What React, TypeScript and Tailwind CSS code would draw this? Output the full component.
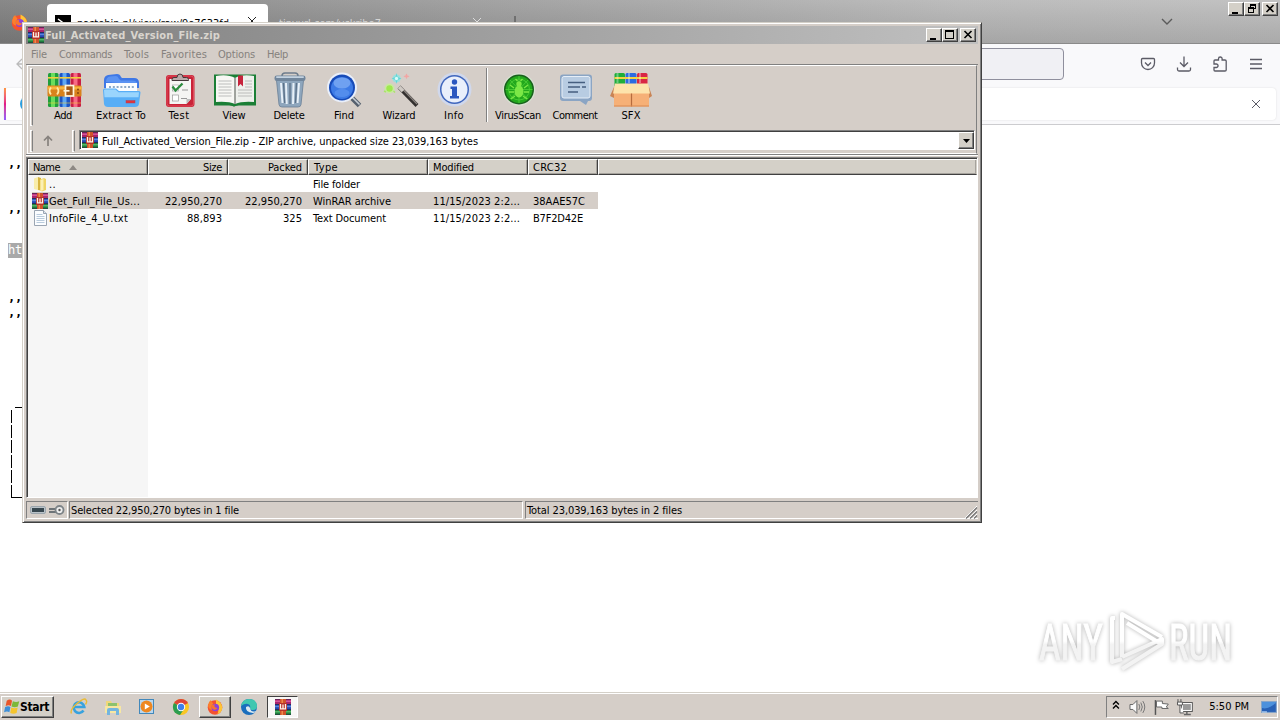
import { useLayoutEffect, useRef } from "react";
import type { ReactNode } from "react";

/* Text run whose letter spacing is computed so it fills exactly `w` pixels. */
function T({ w, children, className = "" }: { w: number; children: string; className?: string }) {
  const ref = useRef<HTMLSpanElement>(null);
  useLayoutEffect(() => {
    const el = ref.current;
    if (!el) return;
    el.style.letterSpacing = "0px";
    el.style.width = "auto";
    const natural = el.getBoundingClientRect().width;
    el.style.letterSpacing = (w - natural) / children.length + "px";
    el.style.width = w + "px";
  }, [w, children]);
  return (
    <span ref={ref} className={"inline-block shrink-0 whitespace-pre " + className}>
      {children}
    </span>
  );
}

function RarIcon({ className = "size-4" }: { className?: string }) {
  return (
    <svg viewBox="0 0 16 16" className={"shrink-0 " + className}>
      <rect width="16" height="16" fill="#2a2140" />
      <rect y="0.500" width="16" height="4.500" fill="#a8246c" />
      <rect y="1.500" width="16" height="1.500" fill="#d65597" />
      <rect y="5.700" width="16" height="4.600" fill="#2448b0" />
      <rect y="6.700" width="16" height="1.500" fill="#5a86dd" />
      <rect y="11" width="16" height="4.500" fill="#1f7d3d" />
      <rect y="12" width="16" height="1.500" fill="#55b568" />
      <rect x="5" y="0" width="6" height="16" fill="#d0532a" />
      <rect x="6.500" y="0" width="1.500" height="16" fill="#ef8a4a" />
      <rect x="4" y="4" width="8" height="8" fill="#b8322a" />
      <path d="M5.500 5v4.800h5V5M8 5.500v4" fill="none" stroke="#fdf4ea" strokeWidth="1.300" />
    </svg>
  );
}

function AddIcon() {
  const books = [
    ["#1f9e3c", "#69dd5c", 9],
    ["#1d55c4", "#5ea8f4", 20.5],
    ["#c81f45", "#f76a86", 31.5],
  ] as const;
  return (
    <g>
      {books.map(([dark, light, x]) => (
        <g key={x}>
          <rect x={x} y="1" width="10.5" height="34" rx="1.5" fill={dark} />
          <rect x={x + 3} y="1" width="4" height="34" fill={light} />
          <rect x={x} y="5" width="10.5" height="1.6" fill="#f2cf3c" />
          <rect x={x} y="30.5" width="10.5" height="1" fill="#f2cf3c" opacity="0.6" />
        </g>
      ))}
      <rect x="8.5" y="13.5" width="34" height="11" rx="1" fill="#d9821c" />
      <rect x="8.5" y="14.5" width="34" height="3" fill="#f9b43e" />
      <path d="M12 15.5q-3 3.500 0 7M18 15.500q3 3.500 0 7" fill="none" stroke="#ffe9a6" strokeWidth="1.8" />
      <rect x="26.500" y="13.500" width="8" height="10.500" fill="#a95b16" stroke="#fff6dd" strokeWidth="1.7" />
      <path d="M24.500 18.800h6" stroke="#fff6dd" strokeWidth="1.700" />
      <circle cx="39" cy="17.500" r="0.900" fill="#7e3e0c" />
      <circle cx="39" cy="21" r="0.900" fill="#7e3e0c" />
    </g>
  );
}

function ExtractIcon() {
  return (
    <g>
      <path d="M7 8q0-4 4-5l9-1q3 0 4 3l1 1h12q5 0 5 5v5H7z" fill="#3f78e6" />
      <path d="M9 10q0-5 4-5.500l6-.500q2 0 3 3l2 1.500H35q5 0 6 4z" fill="#5b93f2" />
      <rect x="9" y="11" width="31" height="13" fill="#fbfdff" />
      <path d="M12 15h26" stroke="#8eaac8" strokeWidth="2" strokeDasharray="2 1.800" />
      <path d="M6 18q0-1.500 1.500-1.500H19l3 2.500h20q1.500 0 1.500 1.500L42 32q-.4 3-4 3H11q-3.500 0-4-3z" fill="#58aef6" />
      <path d="M7 18.500q0-1 1-1h10.500l3 2.700H42l-.5 5H7.500z" fill="#9ad5fd" />
      <rect x="29" y="28.500" width="9" height="2.500" fill="#e2353b" stroke="#a9435f" strokeWidth="0.500" />
    </g>
  );
}

function TestIcon() {
  return (
    <g>
      <rect x="11" y="3" width="28.500" height="32" rx="3" fill="#c92338" />
      <rect x="12" y="4" width="26.500" height="30" rx="2.500" fill="none" stroke="#e8606c" strokeWidth="0.700" />
      <path d="M14.500 7h21.500v20l-4.500 5H14.500z" fill="#f5f5f3" />
      <path d="M36 27h-4.500v5z" fill="#bbb" />
      <path d="M17 7.500q0-2 2-2h3q0-3.500 3-3.500t3 3.500h3.500q2 0 2 2v1H17z" fill="#b9a9a9" stroke="#46393b" />
      <rect x="17.500" y="13" width="6" height="6" fill="#fff" stroke="#999" strokeWidth="0.600" />
      <path d="M17.500 14.500l3 4 7-7" fill="none" stroke="#2b8c3e" strokeWidth="2.300" />
      <rect x="17.500" y="23" width="6" height="6" fill="#fff" stroke="#999" strokeWidth="0.700" />
      <path d="M27 18h6M26 26.500h6" stroke="#999" />
    </g>
  );
}

function ViewIcon() {
  return (
    <g>
      <path d="M4 2.500h42v31H29q-4 0-5 1.500-1-1.500-5-1.500H4z" fill="#1b7f36" />
      <path d="M6 4q12-2 19 2v26q-7-3-19-2z" fill="#f7f7f4" />
      <path d="M25 6q7-4 19-2v26q-12-1-19 2z" fill="#eef0ec" />
      <path d="M25 6v26" stroke="#8b8f8a" strokeWidth="1.600" />
      <path d="M8.500 9h13M8.500 12h13M8.500 15h13M8.500 18h13M8.500 21h13M8.500 24h13M28 18h14M28 21h14M28 24h14M35 9h7M35 12h7M35 15h7" stroke="#b4b6b6" strokeWidth="0.900" />
      <path d="M28 3.500h5v11l-2.500-2.500-2.500 2.500z" fill="#c6243c" />
    </g>
  );
}

function DeleteIcon() {
  return (
    <g>
      <path d="M11.500 8.500h27l-2.500 24q-.3 2.500-3 2.500H17q-2.700 0-3-2.500z" fill="#8ea6bd" stroke="#6a7f96" strokeWidth="0.800" />
      <path d="M16 11l1.500 20M21 11l.7 21M28.500 11l-.5 21M34 11l-1.500 20" stroke="#e7f0f8" strokeWidth="2" />
      <path d="M18.500 11l1.200 20M25 11v21M31.500 11l-1 20" stroke="#5c7188" strokeWidth="1.300" />
      <path d="M17 4q0-3 3-3h10q3 0 3 3" fill="none" stroke="#6d7c8c" strokeWidth="1.500" />
      <rect x="9.500" y="3.500" width="31" height="5.500" rx="2.300" fill="#71869c" />
      <rect x="11" y="4.200" width="28" height="1.800" rx="0.900" fill="#c3d2e0" />
    </g>
  );
}

function FindIcon() {
  return (
    <g>
      <path d="M31 25l8.500 8.500" stroke="#55606e" strokeWidth="5" />
      <path d="M31.500 24.500l8 8" stroke="#c6cdd5" strokeWidth="1.600" />
      <circle cx="22" cy="15.500" r="15" fill="#e9effa" />
      <circle cx="22" cy="15.500" r="13" fill="#174bb8" />
      <circle cx="22" cy="16" r="11" fill="#3d7be6" />
      <ellipse cx="22" cy="11" rx="8.500" ry="5.500" fill="#8ab5f8" opacity="0.650" />
      <ellipse cx="22" cy="21" rx="7.500" ry="4" fill="#6fa4f6" opacity="0.450" />
    </g>
  );
}

function WizardIcon() {
  return (
    <g>
      <path d="M24 15l18 18.500" stroke="#33302f" strokeWidth="4" />
      <path d="M25 14.500l17 17.500" stroke="#8b8580" strokeWidth="1.200" />
      <path d="M24 15l4 4" stroke="#cfcac4" strokeWidth="3.600" />
      <circle cx="14.500" cy="16.500" r="5" fill="#c3f58e" opacity="0.700" />
      <circle cx="14.500" cy="16.500" r="3.200" fill="#9fe94f" />
      <path d="M9 19l2 1M18.500 19l1.500 1.500" stroke="#a9e66a" strokeWidth="1.500" />
      <circle cx="21.500" cy="6.500" r="4" fill="#8de6e4" opacity="0.800" />
      <path d="M21.500 1l1 4 4 1.500-4 1.500-1 4-1-4-4-1.500 4-1.500z" fill="#5fd6d8" />
      <circle cx="21.500" cy="6.500" r="1.700" fill="#d8fbf8" />
      <path d="M31.500 1.500l.7 2 2.300.800-2.300.800-.7 2-.7-2-2.300-.800 2.300-.800z" fill="#f0918f" />
      <circle cx="31.500" cy="4.300" r="2" fill="#f4b3b0" opacity="0.600" />
    </g>
  );
}

function InfoIcon() {
  return (
    <g>
      <circle cx="24.500" cy="17.500" r="17" fill="#d0d8ec" />
      <circle cx="24.500" cy="17.500" r="14.500" fill="#3f66bd" />
      <circle cx="24.500" cy="17.500" r="13" fill="#e9effb" />
      <path d="M20.500 14.500h6.500V24h2v2.500h-9V24h2v-7h-1.500z" fill="#2a56bf" />
      <circle cx="24.500" cy="10" r="2.700" fill="#2a56bf" />
    </g>
  );
}

function VirusIcon() {
  return (
    <g>
      <circle cx="25" cy="17.500" r="16.200" fill="#d8e2d2" />
      <circle cx="25" cy="17.500" r="15" fill="#19611d" />
      <circle cx="25" cy="17.500" r="13.400" fill="#22a81c" />
      <path d="M25 4v27M11.500 17.500h27M16 8l18 19M34 8L16 27" stroke="#4fd03a" strokeWidth="0.800" />
      <circle cx="25" cy="17.500" r="10.500" fill="none" stroke="#4fd03a" strokeWidth="0.800" />
      <ellipse cx="25" cy="19.500" rx="4.500" ry="6" fill="#7be846" />
      <circle cx="25" cy="12" r="2.700" fill="#7be846" />
      <path d="M20 16l-4-3M20 20h-5M21 24l-4 3M30 16l4-3M30 20h5M29 24l4 3M23.500 9l-2-2M26.500 9l2-2" stroke="#7be846" strokeWidth="1.300" />
    </g>
  );
}

function CommentIcon() {
  return (
    <g>
      <path d="M12 2.500h26q3 0 3 3V26q0 3-3 3h-1l-2 4-6-4H12q-3 0-3-3V5.500q0-3 3-3z" fill="#8ba5c4" />
      <path d="M13 4.500h24q2 0 2 2V24q0 2-2 2H13q-2 0-2-2V6.500q0-2 2-2z" fill="#b8cce2" stroke="#e6eef7" />
      <path d="M17 10.500h17M17 15h12M31 15h4M17 20h10" stroke="#455e7f" strokeWidth="1.700" />
    </g>
  );
}

function SfxIcon() {
  return (
    <g>
      <rect x="7.500" y="1" width="10.500" height="14" rx="1.500" fill="#1fae3a" />
      <rect x="18.500" y="1" width="11" height="14" rx="1.500" fill="#2c6be0" />
      <rect x="30" y="1" width="10.500" height="14" rx="1.500" fill="#d92644" />
      <path d="M7.500 6h33" stroke="#f4d244" strokeWidth="1.800" />
      <path d="M10.500 1v10M22 1v10M33 1v10" stroke="#fff" strokeWidth="2" opacity="0.350" />
      <path d="M7 15h35v19.500H7z" fill="#f6b077" />
      <path d="M7 15l-4 9 4 2zM42 15l3 9-3 2z" fill="#c98455" />
      <path d="M8 11.500h33l2 10H6z" fill="#fde3ac" />
      <path d="M24.500 21.500v13" stroke="#b66c3e" strokeWidth="1.200" />
      <path d="M7 34h35" stroke="#d98a55" />
    </g>
  );
}

function Tool({ icon, label, w, className }: { icon: ReactNode; label: string; w: number; className: string }) {
  return (
    <div className={"flex shrink-0 flex-col items-center " + className}>
      <svg viewBox="0 0 48 36" className="h-9 w-12">{icon}</svg>
      <T w={w} className="mt-px leading-[14px]">{label}</T>
    </div>
  );
}

const raised = "border border-t-white border-l-white border-r-[#404040] border-b-[#404040] bg-[#d4d0c8] shadow-[inset_-1px_-1px_0_#808080]";

function CaptionButtons({ restore = false }: { restore?: boolean }) {
  return (
    <div className="flex">
      <div className={"h-[14px] w-4 " + raised}>
        <svg viewBox="0 0 14 12" className="h-3 w-[14px]"><path d="M3 9h6v2H3z" /></svg>
      </div>
      <div className={"mr-0.5 h-[14px] w-4 " + raised}>
        <svg viewBox="0 0 14 12" className="h-3 w-[14px]" shapeRendering="crispEdges">
          {restore ? (
            <path d="M5 1h6v5H9v4H3V4h2zm1 2v1h3v1h1V3zM4 6v3h4V6z" fillRule="evenodd" />
          ) : (
            <path d="M2 1h9v9H2zm1 2v6h7V3z" fillRule="evenodd" />
          )}
        </svg>
      </div>
      <div className={"h-[14px] w-4 " + raised}>
        <svg viewBox="0 0 14 12" className="h-3 w-[14px]"><path d="M3.500 2l7 7M10.500 2l-7 7" stroke="#000" strokeWidth="1.600" /></svg>
      </div>
    </div>
  );
}

function Gripper({ className }: { className: string }) {
  return <div className={"w-[3px] shrink-0 border-y border-l border-r border-y-white border-l-white border-r-[#808080] " + className} />;
}

function FirefoxIcon({ className }: { className: string }) {
  return (
    <svg viewBox="0 0 16 16" className={className}>
      <circle cx="8" cy="8.500" r="7.300" fill="#f5522f" />
      <path d="M9 .500q6 3 6.300 8-.3 5-5 6.800Q13 10 9 5z" fill="#fdc536" />
      <path d="M1 6q1-4 3-5 0 2 2 3l-1 7q-4-1-4-5z" fill="#fb7f2c" />
      <circle cx="8.300" cy="8.500" r="3.800" fill="#8a42dc" />
      <path d="M4 7q1.500-2 4-1.500-1 1-.5 2t3 1.500q-1.500 2.500-4 1.500T4 7z" fill="#f9742f" />
    </svg>
  );
}

function Browser() {
  return (
    <div className="flex h-[692px] flex-col bg-white">
      <div className="flex h-11 shrink-0 border-b border-[#8a8a8a] bg-[linear-gradient(to_bottom,rgba(255,255,255,0.07),rgba(0,0,0,0.1)),linear-gradient(to_right,#808080,#b8b8b8_75%,#bdbdbd)]">
        <FirefoxIcon className="mt-3.5 ml-[11px] size-[17px]" />
        <div className="mt-1 ml-[19px] flex h-10 w-[221px] rounded-t bg-white">
          <svg viewBox="0 0 16 16" className="mt-[11px] ml-2 size-4"><rect width="16" height="16" /><path d="M3 4l4 3-4 3M8 11h4" stroke="#fff" fill="none" strokeWidth="1.500" /></svg>
          <T w={152} className="mt-3 ml-1.5 text-[11px] leading-4">pastebin.pl/view/raw/9e7633fd</T>
          <svg viewBox="0 0 10 10" className="mt-3 ml-[18px] size-[10px]"><path d="M1 1l8 8M9 1L1 9" stroke="#222" /></svg>
        </div>
        <T w={102} className="mt-4 ml-[11px] text-[11px] leading-4 text-[#d5d5d5]">tinyurl.com/yckrjbe7</T>
        <svg viewBox="0 0 10 10" className="mt-[17px] ml-[91px] size-[10px]"><path d="M1 1l8 8M9 1L1 9" stroke="#ddd" /></svg>
        <svg viewBox="0 0 12 12" className="mt-4 ml-[27px] size-3"><path d="M6 0v12M0 6.500h12" stroke="#444" /></svg>
        <svg viewBox="0 0 12 8" className="mt-[18px] mr-[55px] ml-auto h-2 w-3"><path d="M1 1l5 5 5-5" stroke="#5b5b5b" strokeWidth="1.400" fill="none" /></svg>
        <div className="mt-0.5 mr-0.5"><CaptionButtons restore /></div>
      </div>
      <div className="flex h-[81px] shrink-0 flex-col border-b border-[#cccccf] bg-[#f9f9fb]">
        <div className="flex h-11 items-start">
          <svg viewBox="0 0 12 12" className="mt-[14px] ml-4 size-3"><path d="M6 1L1 6l5 5M1 6h11" stroke="#bbb" strokeWidth="1.300" fill="none" /></svg>
          <div className="mt-1 ml-[72px] h-8 w-[964px] rounded border border-[#8f8f9d] bg-[#f0f0f4]" />
          <div className="mt-3 mr-4 ml-auto flex gap-5 text-[#5b5b66]">
            <svg viewBox="0 0 16 16" className="size-4" fill="none" stroke="currentColor" strokeWidth="1.300"><path d="M2.500 2.500h11q1 0 1 1V7a6.500 6.500 0 0 1-13 0V3.500q0-1 1-1z" /><path d="M5 6.500l3 3 3-3" /></svg>
            <svg viewBox="0 0 16 16" className="size-4" fill="none" stroke="currentColor" strokeWidth="1.300"><path d="M8 .500v10M4 6.500l4 4 4-4M1.500 11.500v2q0 1.500 1.500 1.500h10q1.500 0 1.500-1.500v-2" /></svg>
            <svg viewBox="0 0 16 16" className="size-4" fill="none" stroke="currentColor" strokeWidth="1.300"><path d="M2 7V5q0-1 1-1h3.500V2.800a1.800 1.800 0 0 1 3.600 0V4H13q1.200 0 1.200 1v9q0 1-1.200 1H3q-1 0-1-1v-2.500h2.300a1.700 1.700 0 0 0 0-3.500L2 8z" /></svg>
            <svg viewBox="0 0 16 16" className="size-4" stroke="currentColor" strokeWidth="1.300"><path d="M2 3.500h12M2 8h12M2 12.500h12" /></svg>
          </div>
        </div>
        <div className="mr-1 ml-1 flex h-8 items-center rounded bg-white shadow-[0_0_2px_#ddd]">
          <div className="h-8 w-0.5 bg-gradient-to-b from-[#ff9640] via-[#e31587] to-[#9059ff]" />
          <div className="ml-[14px] size-4 rounded-full bg-[#2c9fe0]" />
          <svg viewBox="0 0 10 10" className="mr-[15px] ml-auto size-[10px]"><path d="M1 1l8 8M9 1L1 9" stroke="#5b5b66" /></svg>
        </div>
      </div>
      <div className="flex flex-1 flex-col items-start pl-2 font-['DejaVu_Sans_Mono',monospace] text-[12px] leading-[15px] font-bold text-black">
        <T w={14} className="mt-[31px]">,,</T>
        <T w={14} className="mt-[30px]">,,</T>
        <div className="mt-[27px] h-[15px] bg-[#a9a9a9] font-normal text-white"><T w={14}>ht</T></div>
        <T w={14} className="mt-[32px]">,,</T>
        <T w={14}>,,</T>
        <div className="mt-[87px] ml-[7px] h-px w-4 bg-black" />
        <div className="mt-0.5 ml-[3px] flex flex-col gap-0.5">
          {[0, 1, 2, 3, 4, 5].map((n) => <div key={n} className="h-[13px] w-px bg-black" />)}
        </div>
        <div className="-mt-px ml-[3px] h-px w-4 bg-black" />
      </div>
    </div>
  );
}

const sunken = "border border-t-[#808080] border-l-[#808080] border-r-white border-b-white";
const headCell = "flex h-4 shrink-0 items-center border-t border-r border-b border-l border-t-white border-l-white border-r-[#404040] border-b-[#404040] bg-[#d4d0c8] shadow-[inset_-1px_-1px_0_#a5a29c]";

type Row = { icon: ReactNode; name: [string, number]; size?: [string, number]; packed?: [string, number]; type: [string, number]; mod?: number; crc?: [string, number]; sel?: boolean };

const rows: Row[] = [
  {
    icon: (
      <svg viewBox="0 0 16 16" className="size-4"><path d="M2 2.500l4-1.500v13l-4-1z" fill="#f9edaa" /><path d="M6 1l3 1v12.500L6 14z" fill="#d8b540" /><path d="M8 3.500l4-1.500 2 1v11l-4 1.500-2-1z" fill="#efd565" /><path d="M8.500 4l3-1v11l-3 1z" fill="#fbf0b4" /></svg>
    ),
    name: ["..", 7],
    type: ["File folder", 47],
  },
  { icon: <RarIcon />, name: ["Get_Full_File_Us...", 91], size: ["22,950,270", 57], packed: ["22,950,270", 57], type: ["WinRAR archive", 78], mod: 87, crc: ["38AAE57C", 52], sel: true },
  {
    icon: (
      <svg viewBox="0 0 16 16" className="size-4"><path d="M2.500.500h9l3 3v12h-12z" fill="#fbfdff" stroke="#9aa5b2" /><path d="M11.500.500v3h3" fill="#dbe4ee" stroke="#9aa5b2" /><path d="M4.500 4.500h6M4.500 6.500h8M4.500 8.500h8M4.500 10.500h8M4.500 12.500h8" stroke="#b9cbdc" /></svg>
    ),
    name: ["InfoFile_4_U.txt", 79], size: ["88,893", 35], packed: ["325", 19], type: ["Text Document", 73], mod: 87, crc: ["B7F2D42E", 50],
  },
];

function ArchiveWindow() {
  return (
    <div className="absolute top-[22px] left-[22px] flex h-[501px] w-[960px] flex-col border border-t-[#d4d0c8] border-l-[#d4d0c8] border-r-[#404040] border-b-[#404040] bg-[#d5cec8] p-[3px] shadow-[inset_1px_1px_0_#fff,inset_-1px_-1px_0_#808080]">
      <div className="flex h-[18px] shrink-0 items-center bg-gradient-to-r from-[#808080] to-[#c0c0c0] pl-0.5">
        <RarIcon />
        <T w={175} className="mt-0.5 ml-px text-[11px] font-bold text-[#d9d5ce]">Full_Activated_Version_File.zip</T>
        <div className="mr-0.5 ml-auto"><CaptionButtons /></div>
      </div>
      <div className="flex h-5 shrink-0 items-center pt-0.5 pl-[5px] text-[#85817d]">
        <T w={16}>File</T>
        <T w={53} className="ml-3">Commands</T>
        <T w={25} className="ml-3">Tools</T>
        <T w={46} className="ml-3">Favorites</T>
        <T w={37} className="ml-[11px]">Options</T>
        <T w={21} className="ml-3">Help</T>
      </div>
      <div className="flex h-[91px] shrink-0 flex-col border-t border-b border-t-[#808080] border-b-[#808080] pr-px pl-px">
        <div className="flex h-[89px] flex-col border border-t-white border-r-[#808080] border-l-white border-b-white">
          <div className="flex h-[62px]">
            <Gripper className="mt-0.5 ml-[2px] h-[58px]" />
            <div className="flex pt-[6px] pl-[5px]">
              <Tool className="w-[50px]" w={18} label="Add" icon={<AddIcon />} />
              <Tool className="w-[66px]" w={50} label="Extract To" icon={<ExtractIcon />} />
              <Tool className="w-[50px]" w={21} label="Test" icon={<TestIcon />} />
              <Tool className="w-[60px]" w={23} label="View" icon={<ViewIcon />} />
              <Tool className="w-[50px]" w={31} label="Delete" icon={<DeleteIcon />} />
              <Tool className="w-[60px]" w={20} label="Find" icon={<FindIcon />} />
              <Tool className="w-[50px]" w={33} label="Wizard" icon={<WizardIcon />} />
              <Tool className="w-[60px]" w={20} label="Info" icon={<InfoIcon />} />
              <div className="-mt-1 ml-0.5 h-[54px] w-0.5 border-r border-l border-r-white border-l-[#808080]" />
              <Tool className="w-[60px]" w={46} label="VirusScan" icon={<VirusIcon />} />
              <Tool className="w-[54px]" w={45} label="Comment" icon={<CommentIcon />} />
              <Tool className="w-[58px]" w={19} label="SFX" icon={<SfxIcon />} />
            </div>
          </div>
          <div className="flex h-[25px] items-center">
            <Gripper className="ml-[2px] h-[22px]" />
            <svg viewBox="0 0 10 12" className="ml-[10px] h-3 w-[10px]"><path d="M5 1.500V11M1 5.500l4-4 4 4" stroke="#87827e" strokeWidth="1.700" fill="none" /></svg>
            <Gripper className="ml-[19px] h-[22px]" />
            <div className="-mt-px ml-1 flex h-5 w-[896px] items-center border border-t-[#808080] border-l-[#808080] border-r-white border-b-white bg-white pl-0.5 shadow-[inset_1px_1px_0_#404040]">
              <RarIcon />
              <T w={376} className="mt-[3px] ml-1">Full_Activated_Version_File.zip - ZIP archive, unpacked size 23,039,163 bytes</T>
              <div className={"mt-px ml-auto flex h-[17px] w-4 items-center justify-center " + raised}>
                <svg viewBox="0 0 7 4" className="h-1 w-[7px]"><path d="M0 0h7L3.500 4z" /></svg>
              </div>
            </div>
          </div>
        </div>
      </div>
      <div className="h-0.5 shrink-0 border-t border-white" />
      <div className="flex h-[341px] shrink-0 flex-col border border-t-[#808080] border-l-[#808080] border-r-white border-b-white bg-[linear-gradient(to_right,#f6f6f6_121px,#fff_121px)] pl-px shadow-[inset_1px_1px_0_#404040]">
        <div className="flex border-t border-[#404040]">
          <div className={headCell + " w-[120px] pt-px pl-1"}>
            <T w={27}>Name</T>
            <svg viewBox="0 0 8 5" className="ml-[9px] h-[5px] w-2"><path d="M0 5h8L4 0z" fill="#8d8984" /></svg>
          </div>
          <div className={headCell + " w-20 justify-end pt-px pr-[5px]"}><T w={19}>Size</T></div>
          <div className={headCell + " w-20 justify-end pt-px pr-[5px]"}><T w={34}>Packed</T></div>
          <div className={headCell + " w-[120px] pt-px pl-[5px]"}><T w={24}>Type</T></div>
          <div className={headCell + " w-[100px] pt-px pl-[4px]"}><T w={41}>Modified</T></div>
          <div className={headCell + " w-[70px] pt-px pl-[4px]"}><T w={34}>CRC32</T></div>
          <div className={headCell + " flex-1 border-r-[#d4d0c8]"} />
        </div>
        {rows.map((r) => (
          <div key={r.name[0]} className="flex h-[17px] pl-1">
            <div className={"flex w-[566px] items-center " + (r.sel ? "bg-[#d5cec8]" : "")}>
              <div className="flex w-[116px] items-center gap-px">{r.icon}<T w={r.name[1]} className="mt-0.5">{r.name[0]}</T></div>
              <div className="flex w-20 justify-end pt-0.5 pr-[6px]">{r.size && <T w={r.size[1]}>{r.size[0]}</T>}</div>
              <div className="flex w-20 justify-end pt-0.5 pr-[6px]">{r.packed && <T w={r.packed[1]}>{r.packed[0]}</T>}</div>
              <div className="flex w-[120px] pt-0.5 pl-[5px]"><T w={r.type[1]}>{r.type[0]}</T></div>
              <div className="flex w-[100px] pt-0.5 pl-[5px]">{r.mod && <T w={r.mod}>11/15/2023 2:2...</T>}</div>
              <div className="flex pt-0.5 pl-[5px]">{r.crc && <T w={r.crc[1]}>{r.crc[0]}</T>}</div>
            </div>
          </div>
        ))}
      </div>
      <div className="flex h-5 shrink-0 gap-0.5 pt-[3px]">
        <div className={"flex h-[18px] w-[42px] items-center pl-1 " + sunken}>
          <svg viewBox="0 0 36 14" className="-ml-px h-[14px] w-9">
            <rect x="0.500" y="3.500" width="15" height="7" rx="1.500" fill="#b9c2c8" stroke="#9ba5ac" />
            <rect x="2" y="5" width="12" height="4" fill="#37474f" />
            <path d="M19 6h9M19 9h8" stroke="#6e7478" strokeWidth="1.800" />
            <circle cx="29.500" cy="7" r="4" fill="#eee" stroke="#7d8387" strokeWidth="1.800" />
            <circle cx="29.500" cy="7" r="1.200" fill="#555" />
          </svg>
        </div>
        <div className={"-ml-px flex h-[18px] w-[454px] items-center pl-px " + sunken}><T w={168} className="mt-0.5">Selected 22,950,270 bytes in 1 file</T></div>
        <div className="flex h-[18px] flex-1 items-center border-t border-b border-l border-t-[#808080] border-b-white border-l-[#808080] pl-px">
          <T w={155} className="mt-0.5">Total 23,039,163 bytes in 2 files</T>
          <svg viewBox="0 0 14 14" className="mt-1 ml-auto size-[14px]"><path d="M1 13L13 1M5 13l8-8M9 13l4-4" stroke="#fff" /><path d="M2 13.500L13 2.500M6 13.500l7-7M10 13.500l3-3" stroke="#777" strokeWidth="1.300" /></svg>
        </div>
      </div>
    </div>
  );
}

function Watermark() {
  return (
    <svg viewBox="0 0 220 90" className="absolute top-[603px] left-[1030px] h-[90px] w-[220px] overflow-visible [filter:drop-shadow(0_0_2px_rgba(0,0,0,0.3))]">
      <defs>
        <linearGradient id="fade" gradientUnits="userSpaceOnUse" x1="0" y1="8" x2="0" y2="68">
          <stop offset="0.5" stopColor="#ffffff" />
          <stop offset="0.56" stopColor="#f3f3f3" />
        </linearGradient>
      </defs>
      <g fill="url(#fade)" stroke="url(#fade)" strokeWidth="1" fontFamily="Liberation Sans Narrow, Roboto, sans-serif" fontSize="50">
        <text x="9" y="56.500" textLength="64" lengthAdjust="spacingAndGlyphs">ANY</text>
        <text x="139" y="56.500" textLength="63" lengthAdjust="spacingAndGlyphs">RUN</text>
      </g>
      <g fill="none" stroke="url(#fade)" strokeWidth="4" strokeLinejoin="round">
        <path d="M92 54V11l40 23" />
        <path d="M97 20l34 21" />
        <path d="M92 54l40-18v5L92 66" />
        <path d="M85 15h-3v44l10-3" />
      </g>
    </svg>
  );
}

function Taskbar() {
  return (
    <div className="flex h-7 items-center border-t border-[#d4d0c8] bg-[#d5cec8] pb-0.5 shadow-[inset_0_1px_0_#fff]">
      <div className={"mt-0.5 ml-px flex h-[22px] w-[53px] items-center " + raised}>
        <svg viewBox="0 0 16 16" className="ml-px size-[17px]">
          <path d="M3.500 2.500q3-2 5 0L7.500 7.500q-2-1.500-5 0z" fill="#e8562a" />
          <path d="M9.300 3q3 1.500 6 0L14 8q-3 1.500-6 0z" fill="#7cb83a" />
          <path d="M2 8.500q3-1.500 5 0L6 13.500q-2-1.500-5 0z" fill="#3d8fd8" />
          <path d="M7.800 9q3 1.500 6 0l-1 5q-3 1.500-6 0z" fill="#f5c52e" />
        </svg>
        <T w={29} className="text-[12px] font-bold">Start</T>
      </div>
      <svg viewBox="0 0 18 18" className="mt-0.5 ml-4 size-[18px]"><path d="M13.500 12.500A5.300 5.300 0 1 1 14.300 9H5" fill="none" stroke="#38a2de" strokeWidth="2.600" /><path d="M1.500 15.500Q-.5 12 7 5.500T16 2q1.500 1.500-.5 4.500" fill="none" stroke="#eabb35" strokeWidth="1.400" /></svg>
      <svg viewBox="0 0 18 18" className="mt-0.5 ml-4 size-[18px]"><path d="M2 3h5l1 2h7v10H2z" fill="#efd77a" /><path d="M4 5h9v5H4z" fill="#8cc26e" /><path d="M1 8h16v7H1z" fill="#f7e7a2" /><path d="M3 17v-5q0-2 2-2h8q2 0 2 2v5h-3v-4H6v4z" fill="#74b5df" /></svg>
      <svg viewBox="0 0 18 18" className="mt-0.5 ml-4 size-[18px]"><rect x="1.500" y="1.500" width="14" height="14" fill="#b9d7ee" stroke="#4288bb" /><circle cx="8.500" cy="8.500" r="6" fill="#ee8720" /><path d="M6.800 5.500l5 3-5 3z" fill="#fff" /></svg>
      <svg viewBox="0 0 18 18" className="mt-0.5 ml-4 size-[18px]"><circle cx="9" cy="9" r="8" fill="#f9c623" /><path d="M9 9L2 5Q4.500 1 9 1t7 4z" fill="#de4538" /><path d="M2 5a8 8 0 0 0 6 12l4-6-3-2z" fill="#2b9d50" /><circle cx="9" cy="9" r="4.200" fill="#fff" /><circle cx="9" cy="9" r="3.200" fill="#3f80ea" /></svg>
      <div className={"mt-0.5 ml-[9px] flex h-[22px] w-8 items-center justify-center " + raised}><FirefoxIcon className="size-4" /></div>
      <svg viewBox="0 0 18 18" className="mt-0.5 ml-[9px] size-[18px]"><circle cx="9" cy="9" r="8" fill="#1a6ebd" /><path d="M1 8q1.500-7 8-7 7.500 0 8 7 0 4-4 4-3 0-3-2 1-3-2-4T1 8z" fill="#40c7b0" /><path d="M6 9q-1 5 7 6 2 0 3-2-5 2-6-3-1-3-4-1z" fill="#dce9f0" /></svg>
      <div className="mt-0.5 ml-[9px] flex h-[22px] w-[31px] items-center justify-center border border-t-[#404040] border-l-[#404040] border-r-white border-b-white bg-[#f8f7f6]"><RarIcon /></div>
      <div className={"mt-0.5 mr-0.5 ml-auto flex h-[22px] w-[172px] items-center " + sunken}>
        <svg viewBox="0 0 8 10" className="-mt-1 ml-[5px] h-[10px] w-2"><path d="M1 4.500l3-3 3 3M1 8.500l3-3 3 3" stroke="#000" strokeWidth="1.400" fill="none" /></svg>
        <svg viewBox="0 0 18 16" className="ml-2 h-4 w-[18px]"><path d="M2 5.500h3l4-4v13l-4-4H2z" fill="#fafafa" stroke="#666" /><path d="M11 5q2 3 0 6M13 3.500q3 4.500 0 9M15 2q4 6 0 12" stroke="#777" fill="none" /></svg>
        <svg viewBox="0 0 18 16" className="ml-[7px] h-4 w-[18px]"><path d="M2.500 1v15" stroke="#555" strokeWidth="1.500" /><path d="M3.500 2h6v2.500l6 .500-2 3 2 1.500H9V8H3.500z" fill="#fff" stroke="#666" /></svg>
        <svg viewBox="0 0 18 18" className="ml-[6px] size-[18px]"><rect x="5.500" y="4.500" width="11" height="9" fill="#999" stroke="#555" /><rect x="6.500" y="5.500" width="9" height="7" fill="none" stroke="#fff" /><path d="M8 16.500h7M11 14v2" stroke="#666" strokeWidth="1.500" /><path d="M2 1v3M5 1v3M1.500 4h5v3h-5zM4 7v8h4" stroke="#555" fill="#fff" /></svg>
        <T w={40} className="mt-px ml-[15px]">5:50 PM</T>
        <svg viewBox="0 0 16 14" className="ml-3 h-[14px] w-4"><rect x="0.500" y="1.500" width="15" height="11" fill="#2861b6" stroke="#88a6c9" /><path d="M1 8Q7 10 15 3V2H1z" fill="#4d91dc" /><path d="M1 12h5" stroke="#cfe8ff" /></svg>
      </div>
    </div>
  );
}

export default function App() {
  return (
    <div className="relative h-[720px] w-[1280px] overflow-hidden bg-white font-['DejaVu_Sans_Condensed','DejaVu_Sans',sans-serif] text-[11px] leading-[14px] text-black [font-stretch:condensed]">
      <Browser />
      <Taskbar />
      <ArchiveWindow />
      <Watermark />
    </div>
  );
}
